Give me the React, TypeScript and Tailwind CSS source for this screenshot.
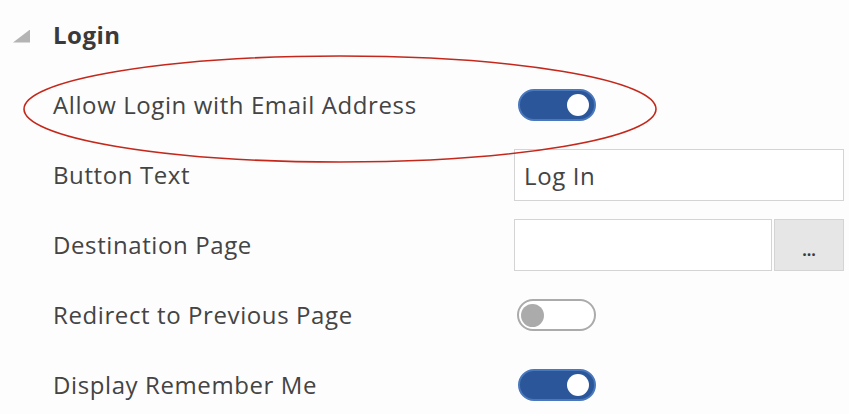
import { useState } from "react";

const Toggle = ({ on, onChange }: { on: boolean; onChange: (v: boolean) => void }) => (
  <button
    type="button"
    onClick={() => onChange(!on)}
    className={
      on
        ? "ml-[4px] flex h-[32px] w-[78px] items-center justify-end rounded-full border-2 border-[#4a78bd] bg-[#2b579a] pr-[5px]"
        : "ml-[3px] flex h-[32px] w-[79px] items-center justify-start rounded-full border-2 border-[#ababab] bg-white pl-[2px]"
    }
  >
    <span className={on ? "h-[22px] w-[22px] rounded-full bg-white" : "h-[23px] w-[23px] rounded-full bg-[#ababab]"} />
  </button>
);

const Row = ({ label, children }: { label: string; children: React.ReactNode }) => (
  <div className="flex h-[70px] items-center">
    <div className="w-[514px] shrink-0 pl-[53px]">{label}</div>
    <div className="flex w-[330px] items-center">{children}</div>
  </div>
);

export default function App() {
  const [emailLogin, setEmailLogin] = useState(true);
  const [redirect, setRedirect] = useState(false);
  const [remember, setRemember] = useState(true);
  const [buttonText, setButtonText] = useState("Log In");
  const [destination, setDestination] = useState("");

  return (
    <div
      className="relative h-[414px] w-[849px] overflow-hidden bg-[#fdfdfd] text-[24px] tracking-[0.6px] text-[#444444]"
      style={{ fontFamily: '"Open Sans", "Noto Sans", sans-serif' }}
    >
      <div className="flex h-[70px] items-center">
        <div className="ml-[13px] mt-[2px] h-[13px] w-[17px] bg-[#b4b4b4] [clip-path:polygon(100%_0,100%_100%,0_100%)]" />
        <div className="ml-[23px] text-[24px] font-bold tracking-[0.5px] text-[#3a3a3a]">Login</div>
      </div>

      <Row label="Allow Login with Email Address">
        <Toggle on={emailLogin} onChange={setEmailLogin} />
      </Row>

      <Row label="Button Text">
        <input
          value={buttonText}
          onChange={e => setButtonText(e.target.value)}
          className="h-[52px] w-full border border-[#d4d4d4] bg-white px-[9px] text-[#444444] outline-none"
        />
      </Row>

      <Row label="Destination Page">
        <input
          value={destination}
          onChange={e => setDestination(e.target.value)}
          className="h-[52px] w-[258px] border border-[#d4d4d4] bg-white px-[9px] outline-none"
        />
        <button
          type="button"
          className="ml-[2px] flex h-[52px] w-[70px] items-end justify-center border border-[#d4d4d4] bg-[#e6e6e6] pb-[12px] text-[16px] font-bold leading-none tracking-[0px] text-[#3a3a3a]"
        >
          ...
        </button>
      </Row>

      <Row label="Redirect to Previous Page">
        <Toggle on={redirect} onChange={setRedirect} />
      </Row>

      <Row label="Display Remember Me">
        <Toggle on={remember} onChange={setRemember} />
      </Row>

      {/* annotation ring */}
      <svg className="pointer-events-none absolute left-0 top-0" width="849" height="414">
        <ellipse cx="340" cy="109" rx="316" ry="53" fill="none" stroke="#c4281c" strokeWidth="1.6" />
      </svg>
    </div>
  );
}
